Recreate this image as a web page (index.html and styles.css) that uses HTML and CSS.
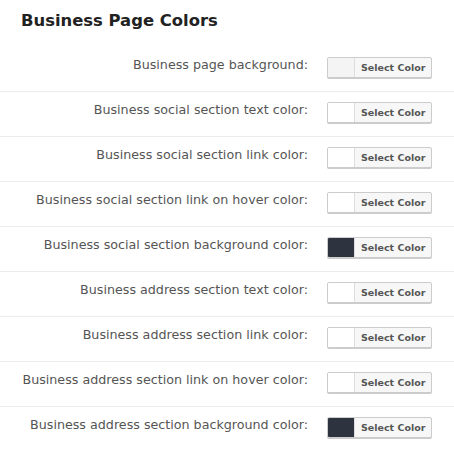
FILE: index.html
```html
<!DOCTYPE html>
<html>
<head>
<meta charset="utf-8">
<link rel="stylesheet" href="styles.css">
</head>
<body>
<div class="panel">
  <h2 class="title">Business Page Colors</h2>
  <div class="rows">
    <div class="row"><div class="label">Business page background:</div><div class="picker"><span class="swatch light"></span><span class="btn">Select Color</span></div></div>
    <div class="row"><div class="label">Business social section text color:</div><div class="picker"><span class="swatch"></span><span class="btn">Select Color</span></div></div>
    <div class="row"><div class="label">Business social section link color:</div><div class="picker"><span class="swatch"></span><span class="btn">Select Color</span></div></div>
    <div class="row"><div class="label">Business social section link on hover color:</div><div class="picker"><span class="swatch"></span><span class="btn">Select Color</span></div></div>
    <div class="row"><div class="label">Business social section background color:</div><div class="picker"><span class="swatch dark"></span><span class="btn">Select Color</span></div></div>
    <div class="row"><div class="label">Business address section text color:</div><div class="picker"><span class="swatch"></span><span class="btn">Select Color</span></div></div>
    <div class="row"><div class="label">Business address section link color:</div><div class="picker"><span class="swatch"></span><span class="btn">Select Color</span></div></div>
    <div class="row"><div class="label">Business address section link on hover color:</div><div class="picker"><span class="swatch"></span><span class="btn">Select Color</span></div></div>
    <div class="row last"><div class="label">Business address section background color:</div><div class="picker"><span class="swatch dark"></span><span class="btn">Select Color</span></div></div>
  </div>
</div>
</body>
</html>
```
FILE: styles.css
```css
html, body {
  margin: 0;
  padding: 0;
  background: #fff;
}
body {
  font-family: "DejaVu Sans", Verdana, sans-serif;
}
.panel {
  width: 454px;
}
.title {
  margin: 0;
  padding: 10px 0 0 21px;
  height: 37px;
  box-sizing: border-box;
  font-size: 16.4px;
  font-weight: bold;
  color: #222;
  line-height: 22px;
}
.rows {
  padding-top: 10px;
}
.row {
  display: flex;
  align-items: flex-start;
  height: 45px;
  box-sizing: border-box;
  padding-top: 10px;
  border-bottom: 1px solid #ececec;
}
.row.last {
  border-bottom: none;
}
.label {
  width: 308px;
  text-align: right;
  font-size: 12.7px;
  line-height: 15px;
  color: #555;
}
.picker {
  margin-left: 19px;
  display: flex;
  height: 21px;
  box-sizing: border-box;
  border: 1px solid #ccc;
  border-radius: 2px;
  box-shadow: 0 1px 0 #ccc;
  background: #f7f7f7;
  overflow: hidden;
}
.swatch {
  width: 26px;
  background: #fff;
  border-right: 1px solid #ddd;
}
.swatch.light {
  background: #f4f4f4;
}
.swatch.dark {
  background: #2d3440;
}
.btn {
  padding: 0 6px 0 6px;
  font-size: 9.5px;
  font-weight: bold;
  color: #555;
  line-height: 19px;
}
```
